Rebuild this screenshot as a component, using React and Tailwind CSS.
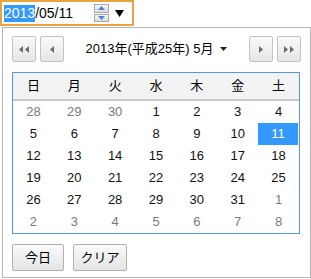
import React from 'react'

const font = { fontFamily: '"Liberation Sans", Arial, "Noto Sans CJK JP", sans-serif' }

const weekdays = ['日', '月', '火', '水', '木', '金', '土']

// 6 rows of the May 2013 grid, out = from prev/next month
const weeks = [
  [[28, 1], [29, 1], [30, 1], [1], [2], [3], [4]],
  [[5], [6], [7], [8], [9], [10], [11, 0, 1]],
  [[12], [13], [14], [15], [16], [17], [18]],
  [[19], [20], [21], [22], [23], [24], [25]],
  [[26], [27], [28], [29], [30], [31], [1, 1]],
  [[2, 1], [3, 1], [4, 1], [5, 1], [6, 1], [7, 1], [8, 1]],
]

function Tri({ dir = 'right', double = false }) {
  const one = dir === 'right' ? 'M0 0 L4 3.5 L0 7 Z' : 'M4 0 L0 3.5 L4 7 Z'
  return (
    <svg width={double ? 10 : 4} height="7" viewBox={double ? '0 0 10 7' : '0 0 4 7'}>
      <path d={one} fill="#6b6b6b" />
      {double && <path d={one} transform="translate(6 0)" fill="#6b6b6b" />}
    </svg>
  )
}

function NavButton({ children }) {
  return (
    <button className="flex h-[26px] w-[24px] items-center justify-center rounded-[2px] border border-[#c4c4c4] bg-gradient-to-b from-[#fafafa] to-[#e6e6e6]">
      {children}
    </button>
  )
}

function Spinner() {
  return (
    <div className="flex h-[18px] w-[15px] flex-col gap-[1px]">
      <div className="flex flex-1 items-center justify-center border border-[#a9a9a9] bg-gradient-to-b from-[#f6f6f6] to-[#dcdcdc]">
        <svg width="7" height="4" viewBox="0 0 7 4"><path d="M0 4 L3.5 0 L7 4 Z" fill="#4f7fd6" /></svg>
      </div>
      <div className="flex flex-1 items-center justify-center border border-[#a9a9a9] bg-gradient-to-b from-[#f6f6f6] to-[#dcdcdc]">
        <svg width="7" height="4" viewBox="0 0 7 4"><path d="M0 0 L3.5 4 L7 0 Z" fill="#4f7fd6" /></svg>
      </div>
    </div>
  )
}

export default function App() {
  return (
    <div className="h-[279px] w-[311px] bg-white text-black" style={font}>
      {/* date input with focus ring */}
      <div className="flex h-[26px] w-[134px] items-center border-2 border-[#e8a53f] pl-[2px] text-[14px] leading-none">
        <span className="flex h-[17px] items-center bg-[#3399ff] text-white">2013</span>
        <span>/05/11</span>
        <div className="ml-[21px]">
          <Spinner />
        </div>
        <svg className="ml-[6px]" width="9" height="7" viewBox="0 0 9 7"><path d="M0 0 L9 0 L4.5 7 Z" fill="#000" /></svg>
      </div>

      {/* popup */}
      <div className="ml-[2px] mt-px h-[251px] w-[309px] border border-[#b5b5b5] px-[9px] pt-[8px]">
        <div className="flex items-center">
          <div className="flex gap-[4px]">
            <NavButton><Tri dir="left" double /></NavButton>
            <NavButton><Tri dir="left" /></NavButton>
          </div>
          <div className="flex flex-1 items-center justify-center gap-[7px] text-[13px]">
            <span>2013年(平成25年) 5月</span>
            <svg width="7" height="4" viewBox="0 0 7 4"><path d="M0 0 L7 0 L3.5 4 Z" fill="#222" /></svg>
          </div>
          <div className="flex gap-[4px]">
            <NavButton><Tri dir="right" /></NavButton>
            <NavButton><Tri dir="right" double /></NavButton>
          </div>
        </div>

        {/* calendar grid */}
        <div className="mt-[10px] w-[288px] border border-[#5596e6] text-[13px]">
          <div className="grid h-[28px] grid-cols-7 border-b-2 border-[#c8c8c8] bg-[#f3f3f3]">
            {weekdays.map((d) => (
              <div key={d} className="flex items-center justify-center">{d}</div>
            ))}
          </div>
          {weeks.map((w, i) => (
            <div key={i} className="grid h-[22px] grid-cols-7">
              {w.map(([n, out, sel], j) => (
                <div
                  key={j}
                  className={
                    sel
                      ? 'mr-px flex items-center justify-center bg-[#3399ff] text-white'
                      : out
                      ? 'flex items-center justify-center text-[#7a7a7a]'
                      : 'flex items-center justify-center text-[#111]'
                  }
                >
                  {n}
                </div>
              ))}
            </div>
          ))}
        </div>

        <div className="mt-[10px] flex gap-[9px] text-[13px]">
          <button className="h-[27px] w-[52px] rounded-[2px] border border-[#b0b0b0] bg-gradient-to-b from-[#fafafa] to-[#e4e4e4]">今日</button>
          <button className="h-[27px] w-[54px] rounded-[2px] border border-[#b0b0b0] bg-gradient-to-b from-[#fafafa] to-[#e4e4e4]">クリア</button>
        </div>
      </div>
    </div>
  )
}
